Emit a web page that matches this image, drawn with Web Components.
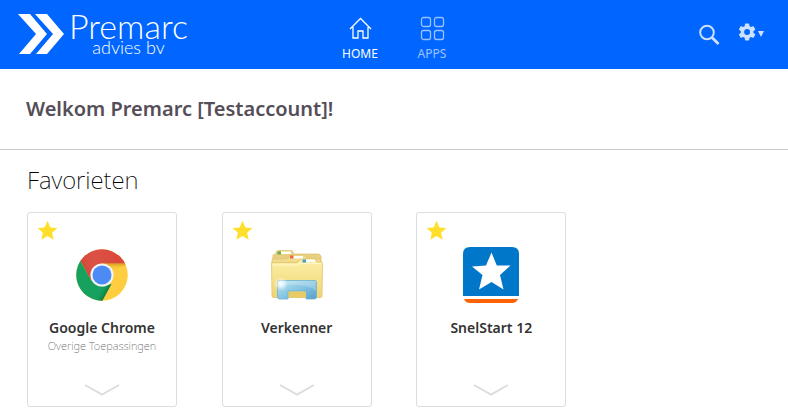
<!DOCTYPE html>
<html lang="nl">
<head>
<meta charset="utf-8">
<title>Premarc advies bv</title>
<meta name="viewport" content="width=device-width, initial-scale=1">
<style>
body { margin: 0; background: #fff; font-family: "Noto Sans", "Open Sans", sans-serif; color: #333; }
</style>
</head>
<body>
<portal-header>
  <brand-logo></brand-logo>
  <nav-item slot="nav" label="HOME" icon="home" current></nav-item>
  <nav-item slot="nav" label="APPS" icon="apps"></nav-item>
</portal-header>
<main>
  <welcome-bar>Welkom Premarc [Testaccount]!</welcome-bar>
  <favorites-section heading="Favorieten">
    <app-card name="Google Chrome" category="Overige Toepassingen"><app-icon kind="chrome"></app-icon></app-card>
    <app-card name="Verkenner"><app-icon kind="explorer"></app-icon></app-card>
    <app-card name="SnelStart 12"><app-icon kind="snelstart"></app-icon></app-card>
  </favorites-section>
</main>
<script>
const define = (name, render) => customElements.define(name, class extends HTMLElement {
  constructor() {
    super();
    this.attachShadow({ mode: "open" });
  }
  connectedCallback() {
    this.shadowRoot.innerHTML = render(this);
  }
});

define("brand-logo", () => `
  <style>
    :host { display: block; }
    a { display: flex; align-items: flex-start; gap: 5px; color: #fff; text-decoration: none; }
    svg { display: block; margin-top: 2px; }
    .name { display: grid; justify-items: center; font-family: Lato, "Open Sans", sans-serif; font-weight: 300; }
    .big { font-size: 34px; line-height: 27px; }
    .small { font-size: 18px; line-height: 16px; }
  </style>
  <a href="#" aria-label="Premarc advies bv">
    <svg width="46" height="40" viewBox="0 0 46 40" fill="#fff"><path d="M0 0h12l17 20-17 20H1l17-20zM17 0h12l17 20-17 20H18l17-20z"/></svg>
    <span class="name"><span class="big">Premarc</span><span class="small">advies bv</span></span>
  </a>`);

const navIcons = {
  home: `<path d="M2 13 12.500 2.500 23 13M5 11v11h5v-7h5v7h5V11"/>`,
  apps: `<rect x="1.500" y="1.500" width="9" height="9" rx="2"/><rect x="14.500" y="1.500" width="9" height="9" rx="2"/><rect x="1.500" y="14.500" width="9" height="9" rx="2"/><rect x="14.500" y="14.500" width="9" height="9" rx="2"/>`
};

define("nav-item", el => `
  <style>
    :host { display: block; width: 72px; opacity: .6; }
    :host([current]) { opacity: 1; }
    a { display: grid; justify-items: center; gap: 5px; color: #fff; text-decoration: none; font-size: 12px; line-height: 16px; }
    svg { fill: none; stroke: currentColor; stroke-width: 1.300; }
  </style>
  <a href="#"${el.hasAttribute("current") ? ' aria-current="page"' : ""}>
    <svg width="25" height="25" viewBox="0 0 25 25">${navIcons[el.getAttribute("icon")]}</svg>
    <span>${el.getAttribute("label")}</span>
  </a>`);

define("portal-header", () => `
  <style>
    :host { display: block; background: #06f; }
    header { display: grid; grid-template-columns: 1fr auto 1fr; align-items: start; padding: 12px 14px 7px 18px; }
    nav { display: flex; padding-top: 4px; }
    .actions { display: flex; justify-content: flex-end; align-items: center; gap: 18px; padding: 10px 10px 0 0; }
    button { display: flex; align-items: center; gap: 2px; border: 0; padding: 0; background: none; color: #cce0ff; font: inherit; }
    svg { display: block; }
  </style>
  <header>
    <slot></slot>
    <nav aria-label="Hoofdmenu"><slot name="nav"></slot></nav>
    <div class="actions">
      <button aria-label="Zoeken"><svg width="22" height="24" viewBox="0 0 22 24" fill="none" stroke="currentColor"><circle cx="9" cy="10.500" r="6.800" stroke-width="2"/><path d="m14 15.500 6.500 6.500" stroke-width="2.800"/></svg></button>
      <button aria-label="Instellingen"><svg width="18" height="22" viewBox="3 1.500 18 22" fill="currentColor"><g transform="translate(-.4 -2) scale(1.040)"><path fill-rule="evenodd" d="M19.430 12.980c.04-.32.07-.64.07-.98s-.03-.66-.07-.98l2.110-1.650c.19-.15.24-.42.12-.64l-2-3.460c-.12-.22-.39-.3-.61-.22l-2.490 1c-.52-.4-1.080-.73-1.690-.98l-.38-2.650A.488.488 0 0 0 14 2h-4c-.25 0-.46.18-.49.42l-.38 2.650c-.61.25-1.170.59-1.690.98l-2.490-1c-.23-.09-.49 0-.61.22l-2 3.460c-.13.22-.07.49.12.64l2.110 1.650c-.04.32-.07.65-.07.980s.03.66.07.98l-2.110 1.650c-.19.15-.24.42-.12.640l2 3.460c.12.22.39.3.61.22l2.490-1c.52.4 1.080.73 1.690.98l.38 2.650c.03.24.24.42.49.42h4c.25 0 .46-.18.49-.42l.38-2.650c.61-.25 1.170-.59 1.690-.98l2.490 1c.23.09.49 0 .61-.22l2-3.460c.12-.22.07-.49-.12-.64zM12 15.500a3.500 3.500 0 1 1 0-7 3.500 3.500 0 0 1 0 7z" transform="translate(2.300 2.300) scale(.81)"/></g></svg><svg width="6" height="7" viewBox="0 0 6 7" fill="currentColor"><path d="M0 0h6L3 6z"/></svg></button>
    </div>
  </header>`);

define("welcome-bar", () => `
  <style>
    :host { display: block; border-bottom: 1px solid #ccc; padding: 26px 26px; }
    h1 { margin: 0; font-size: 20px; line-height: 28px; font-weight: 600; color: #554e59; }
  </style>
  <h1><slot></slot></h1>`);

define("favorites-section", el => `
  <style>
    :host { display: block; padding: 14px 27px 6px; }
    h2 { margin: 0 0 16px; font-size: 24px; line-height: 32px; font-weight: 200; color: #000; }
    .grid { display: grid; grid-template-columns: repeat(auto-fill, 150px); justify-content: space-between; gap: 24px; }
  </style>
  <section>
    <h2>${el.getAttribute("heading")}</h2>
    <div class="grid"><slot></slot></div>
  </section>`);

define("app-card", el => `
  <style>
    :host { display: grid; }
    article { display: flex; flex-direction: column; align-items: center; border: 1px solid #ddd; border-radius: 3px; padding: 7px 9px 9px; text-align: center; }
    button { display: block; border: 0; padding: 0; background: none; }
    svg { display: block; }
    .fav { align-self: flex-start; }
    .art { margin-top: 6px; }
    h3 { margin: 15px 0 0; font-size: 14px; line-height: 20px; font-weight: 600; color: #333; }
    p { margin: 0; min-height: 16px; font-size: 11px; line-height: 16px; font-weight: 200; color: #666; white-space: nowrap; }
    .more { margin-top: auto; padding-top: 29px; }
  </style>
  <article>
    <button class="fav" aria-label="Favoriet"><svg width="21" height="21" viewBox="0 0 21 21"><path fill="#ffdf2b" d="m10.500.8 2.900 6.600 7 .7-5.300 4.700 1.600 7-6.200-3.700-6.200 3.700 1.600-7L.6 8.100l7-.7z"/></svg></button>
    <div class="art"><slot></slot></div>
    <h3>${el.getAttribute("name")}</h3>
    <p>${el.getAttribute("category") || ""}</p>
    <button class="more" aria-label="Meer"><svg width="36" height="14" viewBox="0 0 36 14" fill="none" stroke="#ddd" stroke-width="2"><path d="m1 2 17 9.500L35 2"/></svg></button>
  </article>`);

const appArt = {
  chrome: `
    <defs>
      <linearGradient id="r" x1="0" x2="1"><stop stop-color="#d44a3c"/><stop offset=".3" stop-color="#dc5146"/><stop offset="1" stop-color="#db4437"/></linearGradient>
      <linearGradient id="rs" x1="8" y1="27" x2="16" y2="22" gradientUnits="userSpaceOnUse"><stop stop-color="#8a1c10" stop-opacity=".3"/><stop offset="1" stop-color="#a52714" stop-opacity="0"/></linearGradient>
      <linearGradient id="ys" x1="0" y1="17" x2="0" y2="23" gradientUnits="userSpaceOnUse"><stop stop-color="#b07800" stop-opacity=".45"/><stop offset="1" stop-color="#ffcd40" stop-opacity="0"/></linearGradient>
      <linearGradient id="gs" x1="34" y1="44" x2="27" y2="40" gradientUnits="userSpaceOnUse"><stop stop-color="#055524" stop-opacity=".5"/><stop offset="1" stop-color="#0f9d58" stop-opacity="0"/></linearGradient>
      <clipPath id="c"><circle cx="28" cy="28" r="25.800"/></clipPath>
    </defs>
    <g clip-path="url(#c)">
      <rect width="56" height="56" fill="#ffcd40"/>
      <path fill="#16a15f" d="M0 8 6 13 17 33l11 6.500 9.500-2.500L26 58H0z"/>
      <path fill="url(#gs)" d="m26 39.500 11.500-2.500L26 58l-6-3z"/>
      <path fill="url(#r)" d="M4 8 28-2l30 18.500H28L17 33 5.500 12z"/>
      <path fill="url(#rs)" d="M5.500 12 17 33l7-14z"/>
      <path fill="url(#ys)" d="M28 16.500h28L38 24z"/>
    </g>
    <circle cx="28" cy="28" r="11.600" fill="#f3f3f3"/><circle cx="28" cy="28" r="9.500" fill="#4c8bf5"/>`,
  explorer: `
    <defs>
      <linearGradient id="f" x1="0" y1="0" x2="0" y2="1"><stop stop-color="#fcf0a6"/><stop offset="1" stop-color="#f0d475"/></linearGradient>
      <linearGradient id="b" x1="0" y1="0" x2="1" y2="1"><stop stop-color="#b7e5f5"/><stop offset=".45" stop-color="#8cc9e5"/><stop offset="1" stop-color="#559fca"/></linearGradient>
      <radialGradient id="s"><stop stop-color="#fff"/><stop offset="1" stop-color="#fff" stop-opacity="0"/></radialGradient>
    </defs>
    <g stroke="#dfc373" stroke-width=".8">
      <path fill="#e8d080" d="M4 10V8l3-1V5l2-1.500h14L25 7h25l2 2v8H3z"/>
      <path fill="#f0dc8c" d="M3 13q0-1 1-1h12l3-1 2-3h15l2 3 13 1 1 2v5H3z"/>
      <path fill="url(#f)" d="M2.500 17q0-1.500 1.500-1.500h23q2 0 3-1.500l2-2h14l2 3h4q1.500 0 1.500 1.500L53 49q0 1.500-1.500 1.500h-47Q3 50.500 3 49z"/>
    </g>
    <path fill="#fff" d="M12 4.500h10V7H12zM24 9h10v2.500H24zM37 12.500h9V15h-9z"/>
    <path fill="#66b044" d="M8.500 4.500H12V7.500H8.500z"/><path fill="#ed6840" d="M21 8.500h3.500v3H21z"/><path fill="#4c9cc9" d="M33.500 12.500H37v3h-3.500z"/>
    <path d="M4 18h22q3 0 4-1.500h22" fill="none" stroke="#fff7c8"/>
    <path fill="url(#b)" stroke="#6fb2d2" stroke-width=".8" d="M10 33.500q-1.500 0-1.500 1.500v15q0 2 2 2h8.500v-8h18v8h8.500q2 0 2-2V35q0-1.500-1.500-1.500z"/>
    <path fill="#fff" opacity=".22" d="M9 34h38v10q-8-8-38-6z"/>
    <path fill="#e7cb65" d="M20 45h17v5.500H20z"/>
    <circle cx="12" cy="37" r="7" fill="url(#s)"/>`,
  snelstart: `
    <path fill="#0077c8" d="M0 7q0-7 7-7h42q7 0 7 7v42H0z"/>
    <path fill="#ff6200" d="M1 52h54q-1.500 4-6 4H7q-4.500 0-6-4z"/>
    <path fill="#fff" d="m28.500 5.500 5.300 13h13.700L37 28l3.500 14.500-12-7.500-12.500 7.500L19.500 28 9 19.500l14-1z"/>`
};

define("app-icon", el => `
  <style>
    :host { display: block; }
    svg { display: block; }
  </style>
  <svg width="56" height="56" viewBox="0 0 56 56" aria-hidden="true">${appArt[el.getAttribute("kind")]}</svg>`);
</script>
</body>
</html>
